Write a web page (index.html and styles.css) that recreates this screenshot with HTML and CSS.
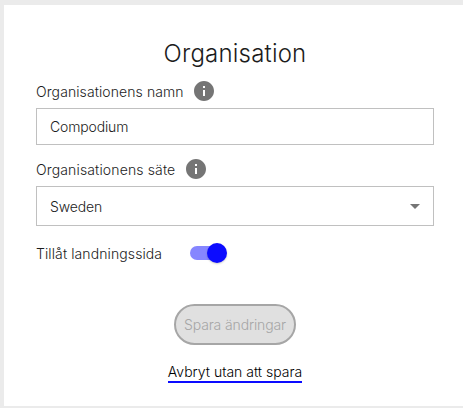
FILE: index.html
```
<!DOCTYPE html>
<html lang="sv">
<head>
<meta charset="utf-8">
<title>Organisation</title>
<link rel="stylesheet" href="styles.css">
</head>
<body>
<main class="card">
  <h1 class="title">Organisation</h1>
  <div class="label-row name-row">
    <label class="label label-name" for="org-name">Organisationens namn</label>
    <svg class="info" viewBox="2 2 20 20"><path d="M12 2C6.48 2 2 6.48 2 12s4.48 10 10 10 10-4.48 10-10S17.52 2 12 2zm1 15h-2v-6h2v6zm0-8h-2V7h2v2z"/></svg>
  </div>
  <input class="field name-field" id="org-name" type="text" value="Compodium">
  <div class="label-row seat-row">
    <span class="label label-seat">Organisationens säte</span>
    <svg class="info" viewBox="2 2 20 20"><path d="M12 2C6.48 2 2 6.48 2 12s4.48 10 10 10 10-4.48 10-10S17.52 2 12 2zm1 15h-2v-6h2v6zm0-8h-2V7h2v2z"/></svg>
  </div>
  <div class="field select-field">
    <span>Sweden</span>
    <svg class="arrow" viewBox="7 10 10 5"><path d="M7 10l5 5 5-5z"/></svg>
  </div>
  <div class="toggle-row">
    <span class="label label-toggle">Tillåt landningssida</span>
    <span class="switch"><span class="thumb"></span></span>
  </div>
  <div class="actions">
    <button class="save" disabled>Spara ändringar</button>
    <a class="cancel">Avbryt utan att spara</a>
  </div>
</main>
</body>
</html>
```

FILE: styles.css
```
* { box-sizing: border-box; }
body {
  margin: 0;
  height: 408px;
  overflow: hidden;
  background: #ebebeb;
  color: #1c1c1c;
  font-family: Inter, "Open Sans", sans-serif;
  font-size: 14px;
  font-weight: 300;
  padding: 5px 0 0 4px;
}
.card {
  width: 462px;
  height: 401px;
  padding: 32px 32px 0;
  background: #fff;
}
.title {
  margin: 0;
  height: 34px;
  line-height: 34px;
  font-size: 24px;
  font-weight: 300;
  letter-spacing: .2px;
  text-align: center;
}
.label-row {
  display: flex;
  align-items: center;
  height: 20px;
  line-height: 20px;
}
.name-row { margin-top: 10px; }
.seat-row { margin-top: 14px; }
.label { white-space: nowrap; }
.label-name { width: 158px; padding-top: 2px; letter-spacing: .09px; }
.label-seat { width: 150px; padding-top: 2px; letter-spacing: .14px; }
.label-toggle { width: 154px; letter-spacing: .1px; }
.info { width: 20px; height: 20px; fill: #757575; }
.field {
  display: flex;
  align-items: center;
  justify-content: space-between;
  width: 398px;
  padding: 0 13px;
  border: 1px solid #c0c0c0;
  border-radius: 0;
  background: #fff;
  font: inherit;
  letter-spacing: -.15px;
  color: inherit;
  outline: none;
}
.name-field { height: 37px; margin-top: 7px; }
.select-field { height: 40px; margin-top: 7px; padding-top: 1px; }
.arrow { width: 10px; height: 5px; fill: #757575; }
.toggle-row {
  display: flex;
  align-items: center;
  height: 20px;
  margin-top: 17px;
}
.switch {
  display: flex;
  align-items: center;
  justify-content: flex-end;
  width: 34px;
  height: 14px;
  border-radius: 7px;
  background: #8686ff;
}
.thumb {
  flex: none;
  width: 20px;
  height: 20px;
  margin-right: -3px;
  border-radius: 50%;
  background: #0c0cff;
  box-shadow: 0 1px 2px rgba(0, 0, 0, .2);
}
.actions {
  display: flex;
  flex-direction: column;
  align-items: center;
  margin-top: 41px;
}
.save {
  width: 122px;
  height: 41px;
  padding: 0 0 1px;
  border: 2px solid #a6a6a6;
  border-radius: 21px;
  background: #e0e0e0;
  color: #a6a6a6;
  font: inherit;
  letter-spacing: -.13px;
  white-space: nowrap;
}
.cancel {
  height: 22px;
  margin-top: 16px;
  border-bottom: 2px solid #0c0cff;
  line-height: 22px;
  color: #000;
  white-space: nowrap;
}
```
